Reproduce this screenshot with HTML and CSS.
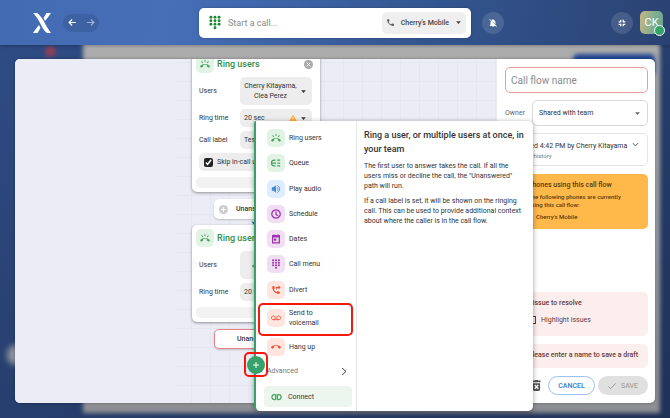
FILE: index.html
```
<!DOCTYPE html>
<html lang="en">
<head>
    <meta charset="utf-8">
    <title>Call flow</title>
    <link rel="stylesheet" href="styles.css">
</head>
<body>
    <!-- icons shared by several items -->
    <svg class="sprite">
        <symbol id="i-ring" viewBox="0 0 24 24"><path d="M23.7 16.7C20.700 13.800 16.500 12 12 12S3.300 13.800.3 16.700c-.2.200-.3.400-.3.700s.1.500.3.700l2.500 2.500c.2.200.4.300.7.300s.5-.1.7-.3c.8-.7 1.700-1.400 2.700-1.900.3-.2.600-.5.600-.9v-3.100c1.400-.5 3-.7 4.500-.7s3.100.200 4.600.7v3.100c0 .400.2.700.6.900 1 .5 1.900 1.100 2.700 1.900.2.200.4.300.7.300s.5-.1.7-.3l2.500-2.500c.2-.2.300-.4.300-.7s-.3-.5-.5-.7zM21.200 6.300l-1.400-1.400-3.600 3.600 1.400 1.400 3.600-3.600zM13 2h-2v5h2V2zM6.400 9.900l1.400-1.400-3.500-3.600-1.400 1.400 3.500 3.600z"/></symbol>
        <symbol id="i-phone" viewBox="0 0 24 24"><path d="M20 15.500c-1.200 0-2.400-.2-3.600-.6-.3-.1-.7 0-1 .2l-2.200 2.200a15 15 0 0 1-6.600-6.600l2.200-2.200c.3-.3.400-.7.200-1C8.700 6.400 8.500 5.200 8.500 4c0-.6-.4-1-1-1H4c-.6 0-1 .4-1 1 0 9.400 7.600 17 17 17 .6 0 1-.4 1-1v-3.500c0-.5-.4-1-1-1z"/></symbol>
        <symbol id="i-caret" viewBox="0 0 24 24"><path d="M4 8h16l-8 9z"/></symbol>
        <symbol id="i-link" viewBox="0 0 24 24"><path d="M10 6H7a6 6 0 0 0 0 12h3M14 6h3a6 6 0 0 1 0 12h-3M10 6v12M14 6v12" fill="none" stroke="currentColor" stroke-width="3"/></symbol>
        <symbol id="i-pad" viewBox="0 0 24 24"><circle cx="5" cy="3" r="2.500"/><circle cx="12" cy="3" r="2.500"/><circle cx="19" cy="3" r="2.500"/><circle cx="5" cy="9" r="2.500"/><circle cx="12" cy="9" r="2.500"/><circle cx="19" cy="9" r="2.500"/><circle cx="5" cy="15" r="2.500"/><circle cx="12" cy="15" r="2.500"/><circle cx="19" cy="15" r="2.500"/><circle cx="12" cy="21" r="2.500"/></symbol>
    </svg>

    <header class="topbar">
        <svg class="logo" viewBox="0 0 18 20"><path d="M0 0h4c3 2 5 5 7 8.500 2 4 4 7.500 7 11.500h-4c-3-2-5-6-7-10C5 6 3 3 0 0z"/><path d="M13.500 0H18c-2 3-4 5.500-6 8l-1.500-3zM4.500 20H0c2-3 4-5.500 6-8l1.500 3z"/></svg>
        <nav class="history">
            <button aria-label="Back"><svg viewBox="0 0 24 24"><path d="M21 12H4M11 4l-8 8 8 8"/></svg></button>
            <button aria-label="Forward" class="off"><svg viewBox="0 0 24 24"><path d="M3 12h17M13 4l8 8-8 8"/></svg></button>
        </nav>
        <div class="dialer">
            <svg class="dialpad"><use href="#i-pad"/></svg>
            <input type="text" placeholder="Start a call..." aria-label="Start a call">
            <button class="device"><svg class="device-icon"><use href="#i-phone"/></svg>Cherry's Mobile<svg class="caret"><use href="#i-caret"/></svg></button>
        </div>
        <button class="round bell" aria-label="Notifications off"><svg viewBox="0 0 24 24"><path d="M12 22a2 2 0 0 0 2-2h-4c0 1.100.9 2 2 2zM18 14.700V11c0-3.100-1.600-5.600-4.500-6.300V4a1.500 1.500 0 0 0-3 0v.7c-.9.200-1.600.5-2.300 1zM3 3.500 5.500 6 7 7.500A7 7 0 0 0 6 11v5l-2 2v1h14l2 2 1.300-1.300L4.300 2.200z"/></svg></button>
        <button class="round shrink" aria-label="Exit full screen"><svg viewBox="0 0 24 24"><path d="M9 4v5H4M15 4v5h5M9 20v-5H4M15 20v-5h5" fill="none" stroke="#fff" stroke-width="3"/></svg></button>
        <div class="avatar">CK<span class="status"></span></div>
    </header>

    <div class="backdrop"><div class="backdrop-page"></div><div class="backdrop-dot"></div><div class="backdrop-dot second"></div><div class="backdrop-button"></div></div>

    <main class="dialog">
        <section class="canvas">
            <div class="grid"></div>
            <article class="node node-one">
                <h2><span class="tile green"><svg><use href="#i-ring"/></svg></span>Ring users<button class="close" aria-label="Remove"><svg viewBox="0 0 24 24"><circle cx="12" cy="12" r="12"/><path d="m7 7 10 10M17 7 7 17" stroke="#fff" stroke-width="2"/></svg></button></h2>
                <div class="field"><span>Users</span><button class="pick tall"><span>Cherry Kitayama,<br>Clea Perez</span><svg class="caret"><use href="#i-caret"/></svg></button></div>
                <div class="field"><span>Ring time</span><button class="pick"><span>20 sec</span><svg class="warn" viewBox="0 0 24 24"><path d="M12 2 0 22h24z"/><path d="M12 9v6M12 17v2" stroke="#fff" stroke-width="2"/></svg><svg class="caret"><use href="#i-caret"/></svg></button></div>
                <div class="field"><span>Call label</span><button class="pick"><span>Test</span></button></div>
                <label class="skip"><input type="checkbox" checked>Skip in-call users</label>
                <div class="strip"></div>
            </article>
            <div class="branch branch-one"><svg viewBox="0 0 24 24"><circle cx="12" cy="12" r="12"/><path d="M12 6v12M6 12h12" stroke="#fff" stroke-width="3"/></svg>Unanswered</div>
            <svg class="arrow"><use href="#i-caret"/></svg>
            <article class="node node-two">
                <h2><span class="tile green"><svg><use href="#i-ring"/></svg></span>Ring users</h2>
                <div class="field"><span>Users</span><button class="pick tall"><svg class="user-arrow" viewBox="0 0 24 24"><path d="M20 2v12H6M10 9l-5 5 5 5" fill="none" stroke="currentColor" stroke-width="3"/></svg></button></div>
                <div class="field"><span>Ring time</span><button class="pick"><span>20 sec</span></button></div>
                <div class="strip"></div>
            </article>
            <div class="branch branch-two">Unanswered</div>
        </section>

        <aside class="side">
            <input class="name" type="text" placeholder="Call flow name" aria-label="Call flow name">
            <div class="owner">
                <label for="owner">Owner</label>
                <div class="select"><select id="owner"><option>Shared with team</option></select><svg class="caret"><use href="#i-caret"/></svg></div>
            </div>
            <div class="saved">
                <div><p>Saved 4:42 PM by Cherry Kitayama</p><a href="#">View history</a></div>
                <svg viewBox="0 0 24 24"><path d="m3 7 9 10 9-10"/></svg>
            </div>
            <div class="phones">
                <h3>Phones using this call flow</h3>
                <p>The following phones are currently using this call flow:</p>
                <ul><li>Cherry's Mobile</li></ul>
            </div>
            <div class="issues">
                <h3>1 issue to resolve</h3>
                <label><input type="checkbox">Highlight issues</label>
            </div>
            <div class="notice">Please enter a name to save a draft</div>
            <footer class="actions">
                <button class="trash" aria-label="Delete"><svg viewBox="0 0 20 24"><path d="M1 1h5l1-1h6l1 1h5v4H1zM2 7h16v14a3 3 0 0 1-3 3H5a3 3 0 0 1-3-3z"/><path d="m6 11 8 8M14 11l-8 8" stroke="#fff" stroke-width="3"/></svg></button>
                <button class="cancel">CANCEL</button>
                <button class="save" disabled><svg viewBox="0 0 24 24"><path d="m1 13 7 7L23 4"/></svg>SAVE</button>
            </footer>
        </aside>
    </main>

    <div class="popover">
        <div class="menu">
            <div class="items">
                <button><span class="tile green"><svg><use href="#i-ring"/></svg></span>Ring users</button>
                <button><span class="tile green"><svg viewBox="0 0 24 24"><path d="M11 5H8a7 7 0 0 0 0 14h3M3 12h9M15 5h7M15 12h7M15 19h7" fill="none" stroke="currentColor" stroke-width="3"/></svg></span>Queue</button>
                <button><span class="tile blue"><svg viewBox="0 0 24 24"><path d="M2 8h4l6-5v18l-6-5H2z"/><path d="M15 8q4 4 0 8M15 3q12 9 0 18" fill="none" stroke="currentColor" stroke-width="2"/></svg></span>Play audio</button>
                <button><span class="tile purple"><svg viewBox="0 0 24 24"><path d="M12 2a10 10 0 1 0 .1 0M12 6v7l5 3" fill="none" stroke="currentColor" stroke-width="3"/></svg></span>Schedule</button>
                <button><span class="tile purple"><svg viewBox="0 0 24 24"><path d="M4 4h16v17H4zM4 7h16M7 1v4M17 1v4" fill="none" stroke="currentColor" stroke-width="3"/><path d="M7 11h6v5H7z"/></svg></span>Dates</button>
                <button><span class="tile purple"><svg><use href="#i-pad"/></svg></span>Call menu</button>
                <button><span class="tile red"><svg viewBox="0 0 24 24"><path d="M20 15.500c-1.200 0-2.400-.2-3.600-.6-.3-.1-.7 0-1 .2l-2.200 2.200a15 15 0 0 1-6.600-6.600l2.200-2.200c.3-.3.400-.7.200-1C8.700 6.400 8.500 5.200 8.500 4c0-.6-.4-1-1-1H4c-.6 0-1 .4-1 1 0 9.400 7.600 17 17 17 .6 0 1-.4 1-1v-3.500c0-.5-.4-1-1-1zM18 1l5 5-5 5V7h-4v4h-2V5h6z"/></svg></span>Divert</button>
                <button class="two-line"><span class="tile red"><svg viewBox="0 0 24 24"><path d="M5.500 7a4.500 4.500 0 1 0 .1 0M18.500 7a4.500 4.500 0 1 0 .1 0M5.500 16h13" fill="none" stroke="currentColor" stroke-width="2"/></svg></span>Send to voicemail</button>
                <button><span class="tile red"><svg viewBox="0 0 24 24"><path d="M12 9c-1.600 0-3.200.3-4.600.7v3.100c0 .4-.2.700-.6.900-1 .5-1.900 1.100-2.700 1.900-.4.300-1 .3-1.400-.1L.3 13c-.4-.4-.4-1 0-1.400C3.300 8.800 7.500 7 12 7s8.700 1.800 11.700 4.600c.4.400.4 1 0 1.400l-2.400 2.500c-.4.400-1 .4-1.400.1-.8-.8-1.700-1.400-2.700-1.900-.4-.2-.6-.5-.6-.9V9.700C15.200 9.300 13.600 9 12 9z"/></svg></span>Hang up</button>
            </div>
            <button class="advanced">Advanced<svg viewBox="0 0 12 18"><path d="m2 2 8 7-8 7"/></svg></button>
            <button class="connect"><svg><use href="#i-link"/></svg>Connect</button>
        </div>
        <div class="detail">
            <h3>Ring a user, or multiple users at once, in your team</h3>
            <p>The first user to answer takes the call. If all the users miss or decline the call, the "Unanswered" path will run.</p>
            <p>If a call label is set, it will be shown on the ringing call. This can be used to provide additional context about where the caller is in the call flow.</p>
        </div>
        <div class="mark mark-item"></div>
        <button class="add" aria-label="Add step"><svg viewBox="0 0 24 24"><path d="M12 3v18M3 12h18"/></svg></button>
        <div class="mark mark-add"></div>
    </div>
</body>
</html>
```
FILE: styles.css
```
* {
    box-sizing: border-box;
}
body {
    position: relative;
    display: flex;
    flex-direction: column;
    height: 100vh;
    margin: 0;
    overflow: hidden;
    background: linear-gradient(150deg, #2f4d87, #1f3155);
    color: #333;
    font: 7px/10px Roboto, "Liberation Sans", sans-serif;
}
h2, h3, p, ul {
    margin: 0;
    padding: 0;
}
button, input, select {
    border: 0;
    padding: 0;
    background: none;
    color: inherit;
    font: inherit;
}
button {
    display: flex;
    align-items: center;
}
svg {
    flex: none;
    fill: currentColor;
}
.sprite {
    position: absolute;
    width: 0;
    height: 0;
}
.caret {
    width: 7px;
    height: 7px;
}

/* top bar */
.topbar {
    display: flex;
    flex: none;
    align-items: center;
    height: 45px;
    padding: 0 7px 0 33px;
    background: linear-gradient(100deg, #436bb2, #466fb8 25%, #33558f 65%, #2a4272);
    box-shadow: 0 0 4px #0006;
    color: #fff;
    z-index: 1;
}
.logo {
    width: 18px;
    height: 20px;
}
.history {
    display: flex;
    justify-content: space-around;
    width: 36px;
    height: 18px;
    margin-left: 12px;
    border-radius: 9px;
    background: #3d62a4;
}
.history svg {
    width: 9px;
    height: 9px;
    fill: none;
    stroke: #fff;
    stroke-width: 3;
}
.history .off {
    opacity: .5;
}
.dialer {
    display: flex;
    flex: none;
    align-items: center;
    width: 272px;
    height: 30px;
    margin-left: 100px;
    padding: 0 5px 0 9px;
    border-radius: 5px;
    background: #fff;
    box-shadow: 0 0 3px #0004;
    color: #444;
}
.dialpad {
    width: 14px;
    height: 15px;
    color: #1d8735;
}
.dialer input {
    flex: 1;
    min-width: 0;
    margin-left: 6px;
    font-size: 9px;
}
input::placeholder {
    color: #8a8a8a;
    opacity: 1;
}
.device {
    gap: 6px;
    height: 22px;
    padding: 0 4px;
    border-radius: 5px;
    background: #efefef;
    font-weight: 500;
}
.device-icon {
    width: 9px;
    height: 9px;
    color: #555;
}
.round {
    justify-content: center;
    width: 22px;
    height: 22px;
    border-radius: 50%;
    background: #ffffff20;
}
.round svg {
    width: 10px;
    height: 10px;
}
.bell {
    margin-left: 11px;
}
.shrink {
    margin-left: auto;
}
.avatar {
    position: relative;
    width: 23px;
    height: 23px;
    margin-left: 7px;
    border-radius: 5px;
    background: linear-gradient(100deg, #c9b582, #7cae91 60%, #6da48e);
    font-size: 11px;
    line-height: 23px;
    text-align: center;
}
.status {
    position: absolute;
    right: -2px;
    bottom: -2px;
    width: 11px;
    height: 11px;
    border: 1px solid #fff;
    border-radius: 50%;
    background: #35a367;
}

/* dimmed page behind the dialog */
.backdrop {
    position: absolute;
    inset: 45px 0 0;
    overflow: hidden;
}
.backdrop-page {
    position: absolute;
    inset: -8px 10px 5px 83px;
    background: linear-gradient(#adadad, #8d8f93);
    filter: blur(2px);
}
.backdrop-dot {
    position: absolute;
    top: 1px;
    left: 45px;
    width: 11px;
    height: 11px;
    border-radius: 50%;
    background: #8e4058;
    filter: blur(2px);
}
.backdrop-dot.second {
    top: 300px;
    left: 7px;
    width: 18px;
    height: 20px;
    background: #93979f;
    filter: blur(3px);
}
.backdrop-button {
    position: absolute;
    top: 9px;
    right: 15px;
    width: 82px;
    height: 22px;
    border-radius: 5px;
    background: #1e4594;
    filter: blur(2px);
}

/* dialog */
.dialog {
    position: relative;
    display: flex;
    flex: 1;
    margin: 14px 15px 15px;
    overflow: hidden;
    border-radius: 5px;
    background: #fff;
    box-shadow: 0 0 3px #0005;
}
.canvas {
    position: relative;
    flex: 1;
    overflow: hidden;
    background: #ececf6;
}
.grid {
    position: absolute;
    inset: 0 0 0 160px;
    background:
        linear-gradient(#e6e6f1 1px, transparent 1px) 0 3px / 19px 19px,
        linear-gradient(90deg, #e6e6f1 1px, transparent 1px) 16px 0 / 19px 19px;
}
.node {
    position: absolute;
    left: 177px;
    width: 128px;
    padding: 4px;
    border-radius: 5px;
    background: #fff;
    box-shadow: 0 1px 3px #0006;
}
.node-one {
    top: -8px;
}
.node-two {
    top: 166px;
}
.node h2 {
    display: flex;
    align-items: center;
    gap: 3px;
    color: #2f8f45;
    font-size: 9px;
    font-weight: 500;
}
.close {
    margin: 0 3px 0 auto;
    color: #aaa;
}
.close svg {
    width: 9px;
    height: 9px;
}
.tile {
    display: flex;
    flex: none;
    align-items: center;
    justify-content: center;
    width: 18px;
    height: 18px;
    border-radius: 5px;
}
.tile svg {
    width: 10px;
    height: 10px;
}
.green {
    background: #e2f3e5;
    color: #43a35c;
}
.blue {
    background: #dfeeff;
    color: #4387d9;
}
.purple {
    background: #f0def3;
    color: #a22fb5;
}
.red {
    background: #ffe5df;
    color: #f3452f;
}
.field {
    display: flex;
    align-items: center;
    margin: 4px 4px 0 3px;
}
.field > span {
    width: 41px;
}
.pick {
    flex: 1;
    gap: 3px;
    height: 18px;
    padding: 0 5px 0 4px;
    border-radius: 5px;
    background: #ededed;
}
.pick > span {
    flex: 1;
    text-align: left;
}
.pick.tall {
    height: 28px;
}
.pick.tall > span {
    text-align: center;
}
.warn {
    width: 8px;
    height: 8px;
    color: #ffad32;
}
.user-arrow {
    width: 7px;
    height: 7px;
    margin-left: 7px;
    color: #35884d;
}
.skip {
    display: flex;
    align-items: center;
    gap: 4px;
    height: 18px;
    margin: 4px 4px 0 3px;
    padding-left: 5px;
    border-radius: 5px;
    background: #ededed;
}
.skip input {
    width: 9px;
    height: 9px;
    margin: 0;
    accent-color: #222;
}
.strip {
    height: 11px;
    margin-top: 6px;
    border-radius: 5px;
    background: #f2f2f2;
}
.branch {
    position: absolute;
    left: 199px;
    display: flex;
    align-items: center;
    gap: 8px;
    width: 84px;
    height: 20px;
    padding-left: 5px;
    border-radius: 5px;
    background: #fff;
    box-shadow: 0 1px 2px #0003;
    font-weight: 500;
}
.branch svg {
    width: 9px;
    height: 9px;
    color: #ccc;
}
.branch-one {
    top: 140px;
}
.branch-two {
    top: 270px;
    padding-left: 22px;
    border: 1px solid #e8828a;
}
.arrow {
    position: absolute;
    top: 160px;
    left: 235px;
    width: 8px;
    height: 8px;
    color: #3366c9;
}

/* settings column */
.side {
    display: flex;
    flex: none;
    flex-direction: column;
    width: 158px;
    padding: 8px 7px 8px 8px;
}
.name {
    flex: none;
    height: 26px;
    padding: 0 5px;
    border: 1px solid #f19a99;
    border-radius: 5px;
    font-size: 10px;
}
.owner {
    display: flex;
    align-items: center;
    margin-top: 7px;
    color: #666;
}
.owner label {
    width: 27px;
}
.select {
    position: relative;
    flex: 1;
    height: 26px;
    border: 1px solid #d9d9d9;
    border-radius: 5px;
}
.select select {
    width: 100%;
    height: 100%;
    padding-left: 6px;
    appearance: none;
    color: #333;
}
.select .caret {
    position: absolute;
    top: 9px;
    right: 6px;
}
.saved {
    display: flex;
    justify-content: space-between;
    height: 33px;
    margin-top: 7px;
    padding: 7px 8px 7px 13px;
    border: 1px solid #e4e4e4;
    border-radius: 5px;
}
.saved a {
    color: #777;
    font-size: 6px;
    text-decoration: none;
}
.saved svg {
    width: 7px;
    height: 7px;
    fill: none;
    stroke: #555;
    stroke-width: 3;
}
.phones {
    height: 55px;
    margin-top: 8px;
    padding: 6px 20px 0 23px;
    border-radius: 5px;
    background: #ffb84a;
    color: #573c12;
    font-size: 6px;
    font-weight: 500;
    line-height: 8px;
}
.side h3 {
    font-size: 7px;
    font-weight: 500;
    line-height: 10px;
}
.phones p {
    margin-top: 3px;
}
.phones ul {
    margin-top: 4px;
    padding-left: 8px;
    list-style: none;
}
.issues, .notice {
    border-radius: 5px;
    background: #fbeeed;
    color: #673a3c;
}
.issues {
    height: 44px;
    margin-top: auto;
    padding: 6px 22px;
}
.issues label {
    display: flex;
    align-items: center;
    gap: 5px;
    margin-top: 7px;
}
.issues input {
    width: 8px;
    height: 8px;
    margin: 0 0 0 1px;
    appearance: none;
    border: 1px solid #673a3c;
}
.notice {
    height: 24px;
    margin-top: 8px;
    padding-left: 23px;
    font-weight: 500;
    line-height: 22px;
    white-space: nowrap;
}
.actions {
    display: flex;
    align-items: center;
    justify-content: flex-end;
    gap: 3px;
    margin-top: 8px;
    font-weight: 500;
}
.trash {
    margin-right: 4px;
    color: #555;
}
.trash svg {
    width: 9px;
    height: 11px;
}
.cancel, .save {
    justify-content: center;
    width: 47px;
    height: 19px;
    border-radius: 10px;
}
.cancel {
    border: 1px solid #9dc0ef;
    color: #3878d0;
}
.save {
    gap: 5px;
    width: 50px;
    background: #e0e0e0;
    color: #a5a5a5;
}
.save svg {
    width: 8px;
    height: 8px;
    fill: none;
    stroke: #999;
    stroke-width: 3;
}

/* step picker */
.popover {
    position: absolute;
    top: 121px;
    left: 254px;
    z-index: 2;
    display: flex;
    width: 279px;
    height: 290px;
    border-left: 2px solid #38a169;
    border-radius: 2px 5px 5px 5px;
    background: #fff;
    box-shadow: 0 1px 5px #0006;
}
.menu {
    display: flex;
    flex: none;
    flex-direction: column;
    width: 101px;
    padding: 8px 4px 4px 8px;
    border-right: 1px solid #e6e6e6;
}
.items {
    display: flex;
    flex: 1;
    flex-direction: column;
    justify-content: space-between;
    padding-left: 3px;
}
.items button {
    gap: 4px;
    text-align: left;
}
.items .two-line {
    height: 25px;
    padding-right: 24px;
}
.advanced {
    justify-content: space-between;
    height: 30px;
    padding: 0 5px 0 3px;
    color: #777;
}
.advanced svg {
    width: 6px;
    height: 9px;
    fill: none;
    stroke: #444;
    stroke-width: 2;
}
.connect {
    gap: 6px;
    height: 21px;
    padding-left: 7px;
    border-radius: 4px;
    background: #edf6ee;
}
.connect svg {
    width: 11px;
    height: 10px;
    color: #43a35c;
}
.detail {
    flex: 1;
    padding: 7px;
}
.detail h3 {
    font-size: 9px;
    font-weight: 500;
    line-height: 14px;
}
.detail p {
    margin-top: 5px;
}
.mark {
    position: absolute;
    border: 2px solid #f5160c;
    border-radius: 5px;
}
.mark-item {
    top: 182px;
    left: 2px;
    width: 95px;
    height: 33px;
}
.mark-add {
    top: 231px;
    left: -12px;
    width: 24px;
    height: 25px;
}
.add {
    position: absolute;
    top: 235px;
    left: -9px;
    justify-content: center;
    width: 18px;
    height: 18px;
    border-radius: 50%;
    background: #38a169;
}
.add svg {
    width: 8px;
    height: 8px;
    stroke: #fff;
    stroke-width: 3;
}
```
